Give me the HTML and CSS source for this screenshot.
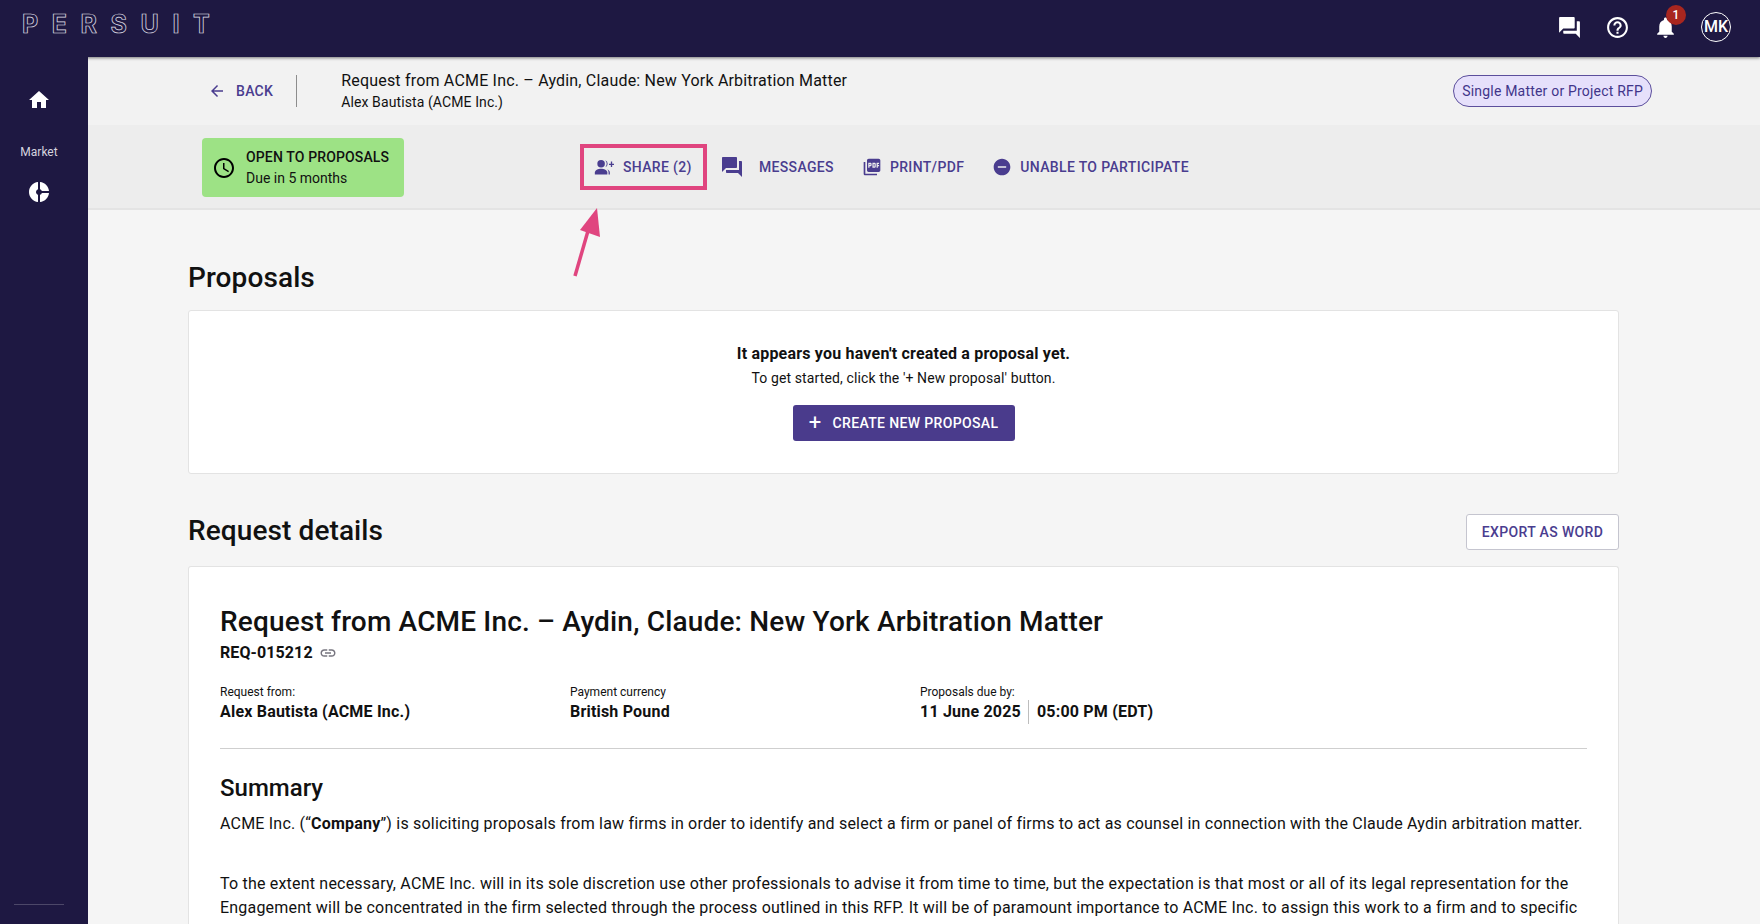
FILE: index.html
```html
<!DOCTYPE html>
<html lang="en">
<head>
    <meta charset="UTF-8">
    <title>Persuit - Request</title>
    <link rel="stylesheet" href="styles.css">
</head>
<body>
    <div class="topbar">
        <div class="logo">PERSUIT</div>
        <div class="top-icons">
            <svg class="top-icon" viewBox="0 0 24 24"><path d="M21 6h-2v9H6v2c0 .55.45 1 1 1h11l4 4V7c0-.55-.45-1-1-1zm-4 6V3c0-.55-.45-1-1-1H3c-.55 0-1 .45-1 1v14l4-4h10c.55 0 1-.45 1-1z"/></svg>
            <svg class="top-icon" viewBox="0 0 24 24"><path d="M11 18h2v-2h-2v2zm1-16C6.48 2 2 6.48 2 12s4.48 10 10 10 10-4.48 10-10S17.52 2 12 2zm0 18c-4.41 0-8-3.59-8-8s3.59-8 8-8 8 3.59 8 8-3.59 8-8 8zm0-14c-2.21 0-4 1.79-4 4h2c0-1.1.9-2 2-2s2 .9 2 2c0 2-3 1.75-3 5h2c0-2.25 3-2.5 3-5 0-2.21-1.79-4-4-4z"/></svg>
            <div class="bell">
                <svg class="top-icon" viewBox="0 0 24 24"><path d="M12 22c1.1 0 2-.9 2-2h-4c0 1.1.9 2 2 2zm6-6v-5c0-3.07-1.63-5.64-4.5-6.32V4c0-.83-.67-1.5-1.5-1.5s-1.5.67-1.5 1.5v.68C7.64 5.36 6 7.92 6 11v5l-2 2v1h16v-1l-2-2z"/></svg>
                <span class="badge">1</span>
            </div>
            <div class="avatar">MK</div>
        </div>
    </div>

    <div class="layout">
        <div class="sidebar">
            <svg class="side-icon" viewBox="0 0 24 24"><path d="M10 20v-6h4v6h5v-8h3L12 3 2 12h3v8z"/></svg>
            <div class="side-label">Market</div>
            <svg class="side-icon" viewBox="0 0 24 24"><path d="M11 9.16V2c-5 .5-9 4.79-9 10s4 9.5 9 10v-7.16c-1-.41-2-1.52-2-2.84s1-2.43 2-2.84zM14.86 11H22c-.48-4.75-4-8.53-9-9v7.16c1 .3 1.52.98 1.86 1.84zM13 14.84V22c5-.47 8.52-4.25 9-9h-7.14c-.34.86-.86 1.54-1.86 1.84z"/></svg>
            <div class="side-line"></div>
        </div>

        <div class="page">
            <div class="subheader">
                <a class="back">
                    <svg viewBox="0 0 24 24"><path d="M20 11H7.83l5.59-5.59L12 4l-8 8 8 8 1.41-1.41L7.83 13H20v-2z"/></svg>
                    BACK
                </a>
                <div class="sub-divider"></div>
                <div class="sub-titles">
                    <div class="sub-title">Request from ACME Inc. – Aydin, Claude: New York Arbitration Matter</div>
                    <div class="sub-name">Alex Bautista (ACME Inc.)</div>
                </div>
                <div class="pill">Single Matter or Project RFP</div>
            </div>

            <div class="actionbar">
                <div class="status">
                    <svg viewBox="0 0 24 24"><path d="M11.99 2C6.47 2 2 6.48 2 12s4.47 10 9.99 10C17.52 22 22 17.52 22 12S17.52 2 11.99 2zM12 20c-4.42 0-8-3.58-8-8s3.58-8 8-8 8 3.58 8 8-3.58 8-8 8zm.5-13H11v6l5.25 3.15.75-1.23-4.5-2.67z"/></svg>
                    <div>
                        <div class="status-title">OPEN TO PROPOSALS</div>
                        <div class="status-due">Due in 5 months</div>
                    </div>
                </div>
                <div class="actions">
                    <a class="action action-share">
                        <svg viewBox="0 0 24 24"><circle cx="8.500" cy="8" r="4.500"/><path d="M8.500 14C5 14 1 15.700 1 18.500V21h15v-2.500C16 15.700 12 14 8.500 14z"/><path d="M13.500 3.800a4.500 4.500 0 0 1 0 8.400 6.500 6.500 0 0 0 0-8.400zM16 14.600c1.900 1 3 2.300 3 3.900V21h-1.500v-2.500c0-1.500-.5-2.800-1.500-3.900z"/><path d="M20.200 8V5.500h1.600V8h2.200v1.600h-2.200v2.500h-1.600V9.600H18V8z"/></svg>
                        SHARE (2)
                    </a>
                    <a class="action action-messages">
                        <svg viewBox="0 0 24 24"><path d="M21 6h-2v9H6v2c0 .55.45 1 1 1h11l4 4V7c0-.55-.45-1-1-1zm-4 6V3c0-.55-.45-1-1-1H3c-.55 0-1 .45-1 1v14l4-4h10c.55 0 1-.45 1-1z"/></svg>
                        MESSAGES
                    </a>
                    <a class="action action-print">
                        <svg viewBox="0 0 24 24"><path d="M20 2H8c-1.1 0-2 .9-2 2v12c0 1.1.9 2 2 2h12c1.1 0 2-.9 2-2V4c0-1.1-.9-2-2-2zm-8.500 7.500c0 .83-.67 1.500-1.500 1.500H9v2H7.500V7H10c.83 0 1.500.67 1.500 1.500v1zm5 2c0 .83-.67 1.500-1.500 1.500h-2.500V7H15c.83 0 1.500.67 1.500 1.500v3zm4-3H19v1h1.500V11H19v2h-1.500V7h3v1.500zM9 9.500h1v-1H9v1zM4 6H2v14c0 1.100.9 2 2 2h14v-2H4V6zm10 5.500h1v-3h-1v3z"/></svg>
                        PRINT/PDF
                    </a>
                    <a class="action action-unable">
                        <svg viewBox="0 0 24 24"><path d="M12 2C6.480 2 2 6.480 2 12s4.480 10 10 10 10-4.480 10-10S17.520 2 12 2zm5 11H7v-2h10v2z"/></svg>
                        UNABLE TO PARTICIPATE
                    </a>
                </div>
            </div>

            <div class="content">
                <h2 class="section-title">Proposals</h2>
                <div class="card empty-card">
                    <div class="empty-title">It appears you haven't created a proposal yet.</div>
                    <div class="empty-text">To get started, click the '+ New proposal' button.</div>
                    <a class="create-btn"><span class="plus">+</span>CREATE NEW PROPOSAL</a>
                </div>

                <div class="details-head">
                    <h2 class="section-title">Request details</h2>
                    <a class="export-btn">EXPORT AS WORD</a>
                </div>
                <div class="card details-card">
                    <h1 class="req-title">Request from ACME Inc. – Aydin, Claude: New York Arbitration Matter</h1>
                    <div class="req-id">REQ-015212
                        <svg viewBox="0 0 24 24"><path d="M3.900 12c0-1.710 1.390-3.100 3.100-3.100h4V7H7c-2.760 0-5 2.240-5 5s2.240 5 5 5h4v-1.900H7c-1.710 0-3.100-1.390-3.100-3.100zM8 13h8v-2H8v2zm9-6h-4v1.900h4c1.710 0 3.100 1.390 3.100 3.100s-1.390 3.100-3.100 3.100h-4V17h4c2.760 0 5-2.240 5-5s-2.240-5-5-5z"/></svg>
                    </div>
                    <div class="meta">
                        <div>
                            <div class="meta-label">Request from:</div>
                            <div class="meta-value">Alex Bautista (ACME Inc.)</div>
                        </div>
                        <div>
                            <div class="meta-label">Payment currency</div>
                            <div class="meta-value">British Pound</div>
                        </div>
                        <div>
                            <div class="meta-label">Proposals due by:</div>
                            <div class="meta-value"><span class="due-date">11 June 2025</span><span>05:00 PM (EDT)</span></div>
                        </div>
                    </div>
                    <h3 class="summary-title">Summary</h3>
                    <p class="summary-first">ACME Inc. (“<b>Company</b>”) is soliciting proposals from law firms in order to identify and select a firm or panel of firms to act as counsel in connection with the Claude Aydin arbitration matter.</p>
                    <p class="summary-next">To the extent necessary, ACME Inc. will in its sole discretion use other professionals to advise it from time to time, but the expectation is that most or all of its legal representation for the Engagement will be concentrated in the firm selected through the process outlined in this RFP. It will be of paramount importance to ACME Inc. to assign this work to a firm and to specific</p>
                </div>
            </div>
        </div>
    </div>

    <!-- annotation drawn over the screenshot -->
    <div class="mark-box"></div>
    <svg class="mark-arrow" width="40" height="80" viewBox="0 0 40 80">
        <path d="M6 68 L21 16" stroke="#e0457f" stroke-width="3.500" fill="none"/>
        <path d="M28 0 L31 29 L11 22 Z" fill="#e0457f"/>
    </svg>
</body>
</html>
```

FILE: styles.css
```css
html, body {
    height: 100%;
}
body {
    font-family: Roboto, "Liberation Sans", sans-serif;
    margin: 0;
    background-color: #f5f5f5;
    color: #111;
    overflow: hidden;
}
a {
    cursor: pointer;
}
.topbar {
    height: 57px;
    background-color: #1e1842;
    display: flex;
    align-items: center;
    justify-content: space-between;
    box-shadow: 0 1px 3px rgba(0,0,0,0.5);
    position: relative;
    box-sizing: border-box;
}
.logo {
    margin: -9px 0 0 22px;
    font-family: Inter, sans-serif;
    font-size: 25px;
    font-weight: 700;
    letter-spacing: 13.6px;
    color: transparent;
    -webkit-text-stroke: 0.7px #e4e2ee;
}
.top-icons {
    display: flex;
    align-items: center;
    margin-right: 29px;
    margin-top: -3px;
}
.top-icon {
    width: 25px;
    height: 25px;
    fill: #fff;
    display: block;
}
.top-icons > .top-icon:first-child {
    margin-right: 23px;
}
.top-icons > .top-icon:nth-child(2) {
    margin-right: 23px;
}
.bell {
    position: relative;
    margin-right: 23px;
}
.badge {
    position: absolute;
    top: -10px;
    left: 13px;
    width: 20px;
    height: 20px;
    border-radius: 50%;
    background-color: #a8261f;
    color: #fff;
    font-size: 12px;
    font-weight: 500;
    line-height: 20px;
    text-align: center;
}
.avatar {
    width: 28px;
    height: 28px;
    border: 1.500px solid #fff;
    border-radius: 50%;
    color: #fff;
    font-size: 16px;
    font-weight: 500;
    line-height: 28px;
    text-align: center;
}
.layout {
    display: flex;
    height: calc(100% - 57px);
}
.sidebar {
    width: 88px;
    flex-shrink: 0;
    background-color: #1e1842;
    display: flex;
    flex-direction: column;
    align-items: center;
    padding: 31px 10px 0 0;
    box-sizing: border-box;
    position: relative;
}
.side-icon {
    width: 24px;
    height: 24px;
    fill: #fff;
}
.side-label {
    color: #d5d3df;
    font-size: 12px;
    line-height: 14px;
    margin: 33px 0 21px;
}
.side-line {
    position: absolute;
    bottom: 19px;
    left: 14px;
    width: 50px;
    height: 1px;
    background-color: #4c4768;
}
.page {
    flex: 1;
    min-width: 0;
    overflow: hidden;
}
.subheader {
    height: 68px;
    background-color: #f2f2f2;
    display: flex;
    align-items: center;
    padding-left: 120px;
    padding-right: 108px;
    box-sizing: border-box;
}
.back {
    display: flex;
    align-items: center;
    color: #4a3d8f;
    font-size: 14px;
    font-weight: 500;
    letter-spacing: 0.3px;
    margin-right: 23px;
}
.back svg {
    width: 18px;
    height: 18px;
    fill: #4a3d8f;
    margin-right: 10px;
}
.sub-divider {
    width: 1px;
    height: 32px;
    background-color: #8d8d8d;
    margin-right: 44px;
}
.sub-titles {
    flex: 1;
}
.sub-title {
    font-size: 16px;
    line-height: 22px;
    letter-spacing: 0.19px;
}
.sub-name {
    font-size: 14px;
    line-height: 20px;
    letter-spacing: 0.1px;
}
.pill {
    height: 32px;
    padding: 0 8px;
    border: 1px solid #5c4f9c;
    border-radius: 16px;
    background-color: #e6e0fb;
    color: #41358a;
    font-size: 14px;
    line-height: 30px;
    letter-spacing: 0.2px;
    box-sizing: border-box;
    white-space: nowrap;
}
.actionbar {
    height: 85px;
    background-color: #ededed;
    border-bottom: 2px solid #e4e4e4;
    display: flex;
    align-items: center;
    padding-left: 114px;
    box-sizing: border-box;
}
.status {
    width: 202px;
    height: 59px;
    background-color: #9de285;
    border-radius: 4px;
    display: flex;
    align-items: center;
    padding-left: 10px;
    box-sizing: border-box;
    margin-top: 2px;
}
.status svg {
    width: 24px;
    height: 24px;
    margin-right: 10px;
    flex-shrink: 0;
}
.status-title {
    font-size: 14px;
    font-weight: 500;
    line-height: 21px;
    letter-spacing: 0.14px;
}
.status-due {
    font-size: 14px;
    line-height: 21px;
}
.actions {
    display: flex;
    align-items: center;
    margin-left: 190px;
    margin-top: 1px;
}
.action {
    display: flex;
    align-items: center;
    color: #4a3d8f;
    font-size: 14px;
    font-weight: 500;
    letter-spacing: 0.35px;
    white-space: nowrap;
}
.action svg {
    fill: #4a3d8f;
    flex-shrink: 0;
}
.action-share svg {
    width: 20px;
    height: 20px;
    margin-right: 9px;
}
.action-share {
    margin-right: 28px;
}
.action-messages svg {
    width: 24px;
    height: 24px;
    margin-right: 15px;
}
.action-messages {
    margin-right: 28px;
}
.action-print svg {
    width: 20px;
    height: 20px;
    margin-right: 8px;
}
.action-print {
    margin-right: 28px;
}
.action-unable svg {
    width: 20px;
    height: 20px;
    margin-right: 8px;
}
.content {
    padding: 0 141px 0 100px;
}
.section-title {
    font-size: 28px;
    font-weight: 500;
    line-height: 36px;
    letter-spacing: 0.1px;
    margin: 0;
}
.content > .section-title {
    margin-top: 50px;
    margin-bottom: 14px;
}
.card {
    background: #fff;
    border: 1px solid #e3e3e3;
    border-radius: 3px;
    box-sizing: border-box;
}
.empty-card {
    height: 164px;
    display: flex;
    flex-direction: column;
    align-items: center;
    padding-top: 31px;
}
.empty-title {
    font-size: 16px;
    font-weight: 700;
    line-height: 24px;
    letter-spacing: 0.2px;
}
.empty-text {
    font-size: 14px;
    line-height: 20px;
    letter-spacing: 0.12px;
    margin-top: 2px;
}
.create-btn {
    margin-top: 17px;
    height: 36px;
    width: 222px;
    background-color: #4a3b8c;
    border-radius: 3px;
    color: #fff;
    font-size: 14px;
    font-weight: 500;
    letter-spacing: 0.35px;
    display: flex;
    align-items: center;
    justify-content: center;
}
.plus {
    font-size: 22px;
    font-weight: 400;
    margin-right: 11px;
    line-height: 36px;
}
.details-head {
    display: flex;
    align-items: flex-start;
    justify-content: space-between;
    margin-top: 40px;
    margin-bottom: 16px;
}
.details-head .section-title {
    margin-top: -1px;
}
.export-btn {
    height: 36px;
    width: 153px;
    border: 1px solid #c5c5cf;
    border-radius: 3px;
    background-color: #fff;
    color: #4a3d8f;
    font-size: 14px;
    font-weight: 500;
    letter-spacing: 0.35px;
    line-height: 34px;
    text-align: center;
    box-sizing: border-box;
}
.details-card {
    padding: 36px 31px 40px;
    height: 500px;
    border-bottom: none;
}
.req-title {
    font-size: 28px;
    font-weight: 500;
    line-height: 38px;
    letter-spacing: 0.17px;
    margin: 0;
}
.req-id {
    display: flex;
    align-items: center;
    font-size: 16px;
    font-weight: 700;
    line-height: 24px;
    letter-spacing: 0.1px;
}
.req-id svg {
    width: 18px;
    height: 18px;
    fill: #77757f;
    margin-left: 6px;
}
.meta {
    display: grid;
    grid-template-columns: 350px 350px 1fr;
    margin-top: 19px;
    padding-bottom: 24px;
    border-bottom: 1px solid #cfcfcf;
}
.meta-label {
    font-size: 12px;
    line-height: 16px;
}
.meta-value {
    font-size: 16px;
    font-weight: 700;
    line-height: 24px;
    letter-spacing: 0.2px;
    display: flex;
}
.due-date {
    border-right: 1px solid #bdbdbd;
    padding-right: 7px;
    margin-right: 8px;
}
.summary-title {
    font-size: 24px;
    font-weight: 500;
    line-height: 32px;
    margin: 23px 0 0;
}
.summary-first, .summary-next {
    font-size: 16px;
    line-height: 24px;
    letter-spacing: 0.2px;
    margin: 0;
}
.summary-first {
    margin-top: 8px;
}
.summary-next {
    margin-top: 36px;
}
.mark-box {
    position: absolute;
    left: 580px;
    top: 144px;
    width: 127px;
    height: 46px;
    border: 4px solid #e0457f;
    box-sizing: border-box;
}
.mark-arrow {
    position: absolute;
    left: 569px;
    top: 208px;
}
```
